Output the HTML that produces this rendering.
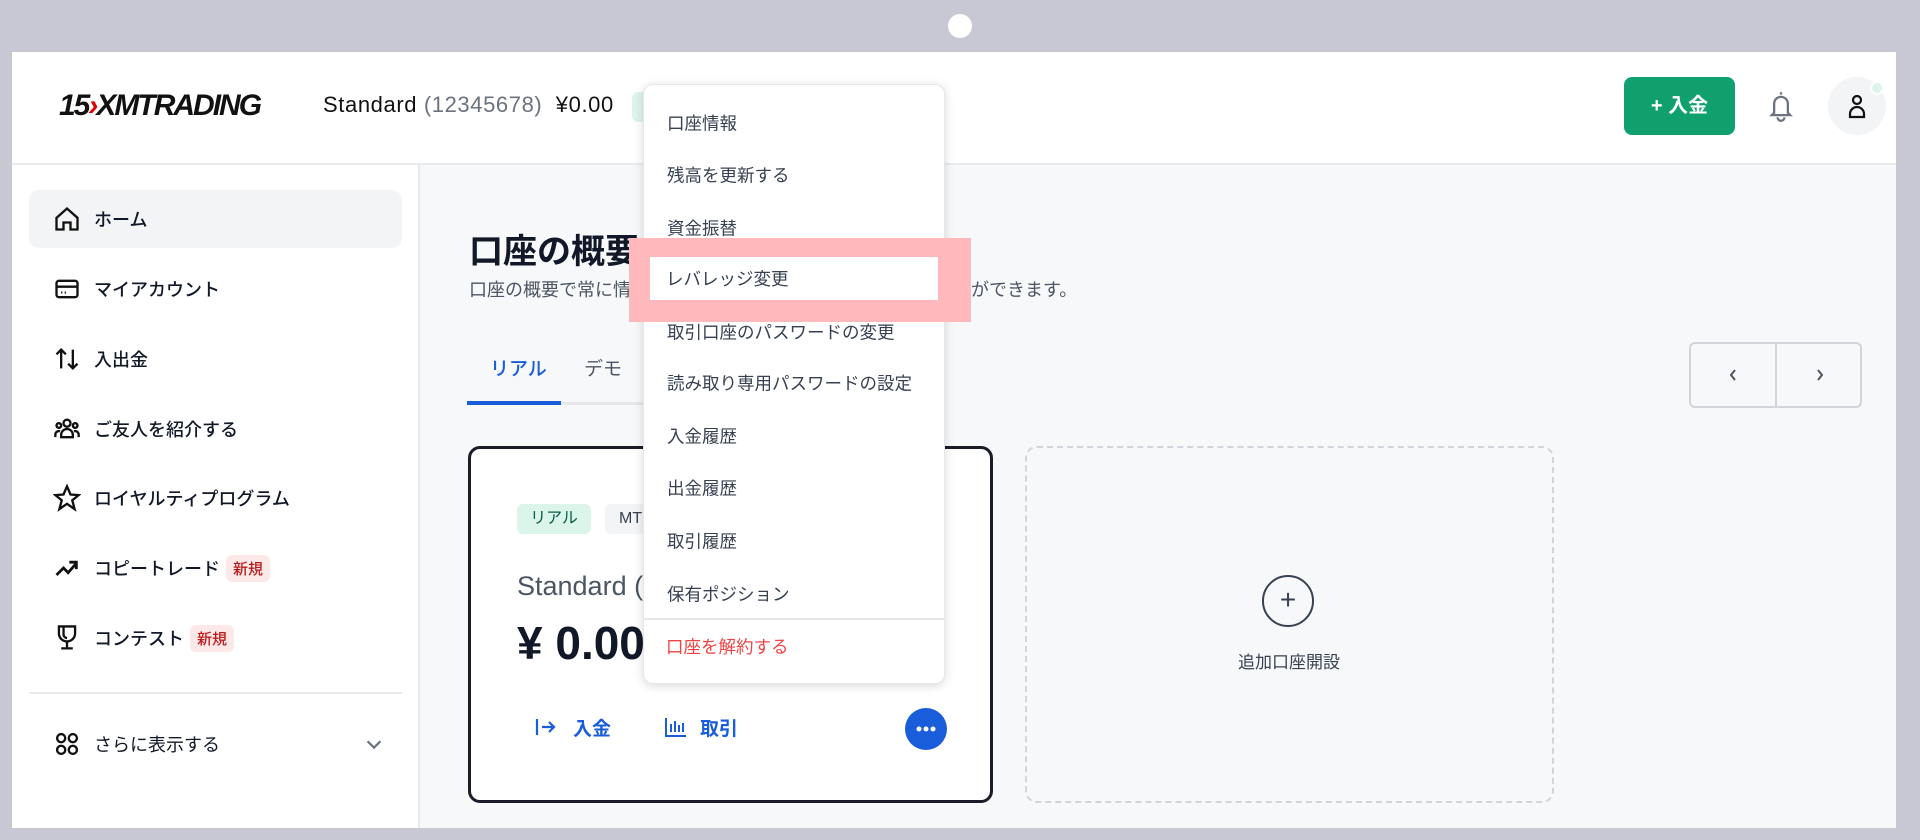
<!DOCTYPE html>
<html><head><meta charset="utf-8"><style>
*{box-sizing:border-box;margin:0;padding:0}
body{width:1920px;height:840px;background:#c8c8d4;font-family:"Liberation Sans","Noto Sans CJK JP",sans-serif;position:relative;overflow:hidden;color:#111827}
.abs{position:absolute}
.cam{left:948px;top:14px;width:24px;height:24px;border-radius:50%;background:#fff}
.screen{left:12px;top:52px;width:1884px;height:776px;background:#f7f8fa;overflow:hidden}
.header{left:0;top:0;width:1884px;height:113px;background:#fff;border-bottom:2px solid #e8eaee}
.side{left:0;top:113px;width:408px;height:663px;background:#fff;border-right:2px solid #e8eaee}
.nav{position:absolute;left:17px;width:373px;height:58px;display:flex;align-items:center;font-size:18px;color:#111827;font-weight:500}
.nav svg{position:absolute;left:24px}
.nav span.t{position:absolute;left:65px}
.badge{display:inline-block;background:#fde8e8;color:#b91c1c;font-size:15px;padding:3px 7px;border-radius:6px;margin-left:6px;vertical-align:1px}
.dd{left:631px;top:32px;width:302px;height:600px;background:#fff;border-radius:10px;box-shadow:0 2px 10px rgba(0,0,0,.15);border:1px solid #e5e7eb}
.dd div{position:absolute;left:23px;font-size:17.5px;color:#374151;transform:translateY(-50%)}
</style></head><body>
<div class="abs cam"></div>
<div class="abs screen">
 <div class="abs header">
  <div class="abs" style="left:47px;top:37px;font-weight:900;font-style:italic;font-size:30px;letter-spacing:-2px;color:#111">15<span style="color:#d00">›</span>XMTRADING</div>
  <div class="abs" style="left:311px;top:40px;font-size:22px;letter-spacing:0.6px;color:#111">Standard <span style="color:#6b7280">(12345678)</span>&nbsp; ¥0.00</div>
  <div class="abs" style="left:620px;top:40px;width:30px;height:30px;background:#dcf5ea;border-radius:6px"></div>
  <div class="abs" style="left:1612px;top:25px;width:111px;height:58px;background:#10a06e;border-radius:8px;color:#fff;font-size:20px;font-weight:700;text-align:center;line-height:58px">+ 入金</div>
  <svg class="abs" style="left:1755px;top:38px" width="28" height="32" viewBox="0 0 24 28" fill="none" stroke="#6b7280" stroke-width="2"><path d="M12 2v2M6 20V12a6 6 0 0 1 12 0v8l2 2H4l2-2zM9 24a3 3 0 0 0 6 0"/></svg>
  <div class="abs" style="left:1816px;top:25px;width:58px;height:58px;border-radius:50%;background:#f3f4f6"></div>
  <svg class="abs" style="left:1833px;top:41px" width="24" height="26" viewBox="0 0 24 26" fill="none" stroke="#111" stroke-width="2.2"><circle cx="12" cy="7" r="4"/><path d="M5 24v-3a7 7 0 0 1 14 0v3z"/></svg>
  <div class="abs" style="left:1858px;top:29px;width:14px;height:14px;border-radius:50%;background:#dcf5ea;border:2px solid #fff"></div>
 </div>
 <div class="abs side">
  <div class="nav" style="top:25px;background:#f3f4f6;border-radius:10px"><svg width="28" height="28" viewBox="0 0 24 24" fill="none" stroke="#111" stroke-width="2"><path d="M3 11l9-8 9 8v10h-6v-6h-6v6H3z"/></svg><span class="t">ホーム</span></div>
  <div class="nav" style="top:95px"><svg width="28" height="28" viewBox="0 0 24 24" fill="none" stroke="#111" stroke-width="2"><rect x="3" y="5" width="18" height="14" rx="2"/><path d="M3 10h18M7 15h1M10 15h1"/></svg><span class="t">マイアカウント</span></div>
  <div class="nav" style="top:165px"><svg width="28" height="28" viewBox="0 0 24 24" fill="none" stroke="#111" stroke-width="2"><path d="M7 20V4M3 8l4-4 4 4M17 4v16M13 16l4 4 4-4"/></svg><span class="t">入出金</span></div>
  <div class="nav" style="top:235px"><svg width="28" height="28" viewBox="0 0 24 24" fill="none" stroke="#111" stroke-width="2"><circle cx="12" cy="7" r="3"/><circle cx="5" cy="9" r="2"/><circle cx="19" cy="9" r="2"/><path d="M7 19v-2a5 5 0 0 1 10 0v2zM2 19v-2a3 3 0 0 1 4-3M22 19v-2a3 3 0 0 0-4-3"/></svg><span class="t">ご友人を紹介する</span></div>
  <div class="nav" style="top:304px"><svg width="28" height="28" viewBox="0 0 24 24" fill="none" stroke="#111" stroke-width="2"><path d="M12 2l3 7 7 .5-5.5 4.5 2 7.5L12 17l-6.5 4.5 2-7.5L2 9.5 9 9z"/></svg><span class="t">ロイヤルティプログラム</span></div>
  <div class="nav" style="top:374px"><svg width="28" height="28" viewBox="0 0 24 24" fill="none" stroke="#111" stroke-width="2.4"><path d="M3 18l6-6 4 4 7-8M14 7h6v6"/></svg><span class="t">コピートレード<span class="badge">新規</span></span></div>
  <div class="nav" style="top:444px"><svg width="28" height="30" viewBox="0 0 24 26" fill="none" stroke="#111" stroke-width="2"><path d="M5 3h14v6a7 7 0 0 1-14 0zM9 4v6a3 3 0 0 0 3 3M12 16v5M7 22h10"/></svg><span class="t">コンテスト<span class="badge">新規</span></span></div>
  <div class="abs" style="left:17px;top:527px;width:373px;height:2px;background:#e8eaee"></div>
  <div class="nav" style="top:550px;font-weight:400"><svg width="28" height="28" viewBox="0 0 24 24" fill="none" stroke="#111" stroke-width="2"><circle cx="7" cy="7" r="3.5"/><circle cx="17" cy="7" r="3.5"/><circle cx="7" cy="17" r="3.5"/><circle cx="17" cy="17" r="3.5"/></svg><span class="t">さらに表示する</span><svg style="left:334px" width="22" height="22" viewBox="0 0 24 24" fill="none" stroke="#6b7280" stroke-width="2.5"><path d="M5 9l7 7 7-7"/></svg></div>
 </div>
 <div class="abs" style="left:457px;top:172px;font-size:34px;font-weight:700;color:#111827">口座の概要</div>
 <div class="abs" style="left:457px;top:224px;font-size:18px;color:#4b5563">口座の概要で常に情報を把握し、すべての口座を管理することができます。</div>
 <div class="abs" style="left:455px;top:350px;width:200px;height:3px;background:#e5e7eb"></div>
 <div class="abs" style="left:455px;top:349px;width:94px;height:4px;background:#1a5ddb"></div>
 <div class="abs" style="left:478px;top:302px;font-size:19px;color:#1a5ddb;font-weight:500">リアル</div>
 <div class="abs" style="left:572px;top:302px;font-size:19px;color:#4b5563">デモ</div>
 <div class="abs" style="left:1677px;top:290px;width:173px;height:66px;border:2px solid #d1d5db;border-radius:6px;background:#f7f8fa"></div>
 <div class="abs" style="left:1763px;top:290px;width:2px;height:66px;background:#d1d5db"></div>
 <svg class="abs" style="left:1715px;top:316px" width="12" height="14" viewBox="0 0 12 14" fill="none" stroke="#4b5563" stroke-width="2"><path d="M8 2L4 7l4 5"/></svg>
 <svg class="abs" style="left:1802px;top:316px" width="12" height="14" viewBox="0 0 12 14" fill="none" stroke="#4b5563" stroke-width="2"><path d="M4 2l4 5-4 5"/></svg>
 <div class="abs" style="left:456px;top:394px;width:525px;height:357px;border:3px solid #1a1d27;border-radius:12px;background:#fff"></div>
 <div class="abs" style="left:505px;top:452px;width:74px;height:30px;background:#dcf5ea;color:#065f46;border-radius:6px;font-size:16px;text-align:center;line-height:30px">リアル</div>
 <div class="abs" style="left:593px;top:452px;width:60px;height:30px;background:#f3f4f6;border-radius:6px;font-size:16px;line-height:30px;padding-left:14px;color:#374151">MT5</div>
 <div class="abs" style="left:505px;top:519px;font-size:27px;font-weight:500;color:#4b5563">Standard (</div>
 <div class="abs" style="left:505px;top:564px;font-size:46px;font-weight:700;color:#111827">¥ 0.00</div>
 <svg class="abs" style="left:522px;top:664px" width="24" height="22" viewBox="0 0 24 22" fill="none" stroke="#1a5ddb" stroke-width="2.2"><path d="M3 3v16M8 11h12M15 6l5 5-5 5"/></svg>
 <div class="abs" style="left:561px;top:662px;font-size:19px;color:#1a5ddb;font-weight:700">入金</div>
 <svg class="abs" style="left:652px;top:664px" width="24" height="22" viewBox="0 0 24 22" fill="none" stroke="#1a5ddb" stroke-width="2"><path d="M2 2v18h20M7 8v8M11 5v11M15 9v7M19 7v9"/></svg>
 <div class="abs" style="left:688px;top:662px;font-size:19px;color:#1a5ddb;font-weight:700">取引</div>
 <div class="abs" style="left:893px;top:656px;width:42px;height:42px;border-radius:50%;background:#1a5ddb"></div>
 <svg class="abs" style="left:893px;top:656px" width="42" height="42"><circle cx="14" cy="21" r="2.5" fill="#fff"/><circle cx="21" cy="21" r="2.5" fill="#fff"/><circle cx="28" cy="21" r="2.5" fill="#fff"/></svg>
 <div class="abs" style="left:1013px;top:394px;width:529px;height:357px;border:2px dashed #d1d5db;border-radius:12px;background:#f7f8fa"></div>
 <div class="abs" style="left:1250px;top:523px;width:52px;height:52px;border:2px solid #374151;border-radius:50%;text-align:center;line-height:46px;font-size:28px;color:#374151">+</div>
 <div class="abs" style="left:1226px;top:596px;font-size:17px;color:#374151">追加口座開設</div>
 <div class="abs dd">
  <div style="top:38px">口座情報</div>
  <div style="top:90px">残高を更新する</div>
  <div style="top:143px">資金振替</div>
  <div style="top:247px">取引口座のパスワードの変更</div>
  <div style="top:298px">読み取り専用パスワードの設定</div>
  <div style="top:351px">入金履歴</div>
  <div style="top:403px">出金履歴</div>
  <div style="top:456px">取引履歴</div>
  <div style="top:509px">保有ポジション</div>
 </div>
 <div class="abs" style="left:631px;top:566px;width:302px;height:2px;background:#e5e7eb"></div>
 <div class="abs" style="left:654px;top:582px;font-size:17.5px;color:#ef4444">口座を解約する</div>
 <div class="abs" style="left:617px;top:186px;width:342px;height:84px;background:#ffb8bc"></div>
 <div class="abs" style="left:638px;top:205px;width:288px;height:43px;background:#fff"></div>
 <div class="abs" style="left:654px;top:214px;font-size:17.5px;color:#374151">レバレッジ変更</div>
</div>
</body></html>
